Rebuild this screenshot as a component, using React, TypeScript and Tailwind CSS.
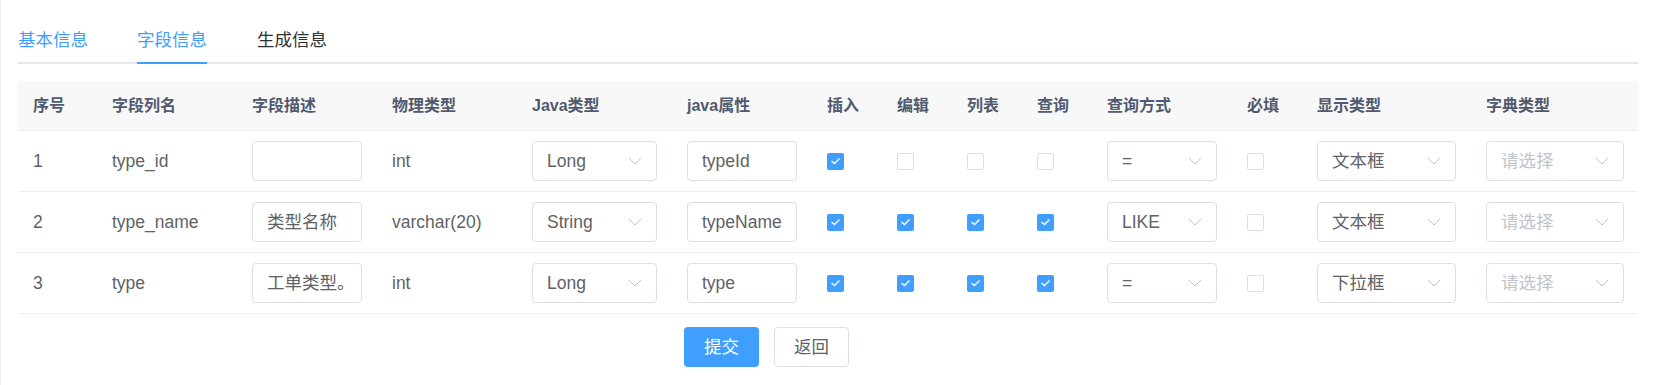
const FONT = "font-['Liberation_Sans','Noto_Sans_CJK_SC',sans-serif]";

const COLS = "grid grid-cols-[79px_140px_140px_140px_155px_140px_70px_70px_70px_70px_140px_70px_169px_167px]";

type Row = {
  no: string;
  name: string;
  desc: string;
  phys: string;
  javaType: string;
  javaField: string;
  insert: boolean;
  edit: boolean;
  list: boolean;
  query: boolean;
  queryType: string;
  required: boolean;
  htmlType: string;
};

const rows: Row[] = [
  { no: "1", name: "type_id", desc: "", phys: "int", javaType: "Long", javaField: "typeId", insert: true, edit: false, list: false, query: false, queryType: "=", required: false, htmlType: "文本框" },
  { no: "2", name: "type_name", desc: "类型名称", phys: "varchar(20)", javaType: "String", javaField: "typeName", insert: true, edit: true, list: true, query: true, queryType: "LIKE", required: false, htmlType: "文本框" },
  { no: "3", name: "type", desc: "工单类型。", phys: "int", javaType: "Long", javaField: "type", insert: true, edit: true, list: true, query: true, queryType: "=", required: false, htmlType: "下拉框" },
];

const headers = ["序号", "字段列名", "字段描述", "物理类型", "Java类型", "java属性", "插入", "编辑", "列表", "查询", "查询方式", "必填", "显示类型", "字典类型"];

function Chevron() {
  return (
    <svg width="14" height="8" viewBox="0 0 14 8" fill="none" className="shrink-0">
      <polyline points="1,1 7,7 13,1" stroke="#c0c4cc" strokeWidth="1" />
    </svg>
  );
}

function Input({ value, width }: { value: string; width: string }) {
  return (
    <div className={`${width} h-[40px] border border-[#dcdfe6] rounded-[4px] bg-white pl-[14px] pr-[4px] flex items-center overflow-hidden whitespace-nowrap text-[#606266]`}>
      {value}
    </div>
  );
}

function Select({ value, width, placeholder }: { value?: string; width: string; placeholder?: string }) {
  return (
    <div className={`${width} h-[40px] border border-[#dcdfe6] rounded-[4px] bg-white pl-[14px] pr-[14px] flex items-center justify-between whitespace-nowrap`}>
      <span className={value ? "text-[#606266]" : "text-[#c0c4cc]"}>{value ?? placeholder}</span>
      <Chevron />
    </div>
  );
}

function Check({ on }: { on: boolean }) {
  if (!on) {
    return <div className="w-[17px] h-[17px] rounded-[2px] border border-[#dcdfe6] bg-white" />;
  }
  return (
    <div className="w-[17px] h-[17px] rounded-[2px] bg-[#409eff] flex items-center justify-center">
      <svg width="11" height="8" viewBox="0 0 11 8" fill="none">
        <polyline points="1.5,4 4.5,6.5 9.5,1.5" stroke="#ffffff" strokeWidth="1.3" />
      </svg>
    </div>
  );
}

export default function App() {
  return (
    <div className={`${FONT} w-[1655px] h-[385px] bg-white border-l border-[#f0f0f0] pl-[17px] text-[17.5px] leading-[20px] text-[#606266]`}>
      {/* Tabs */}
      <div className="w-[1620px] pt-[18px] flex border-b-2 border-[#e4e7ed]">
        <div className="h-[46px] -mb-[2px] pr-[49px] flex items-center border-b-2 border-transparent text-[#409eff]">基本信息</div>
        <div className="h-[46px] -mb-[2px] mr-[50px] flex items-center border-b-2 border-[#409eff] text-[#409eff]">字段信息</div>
        <div className="h-[46px] -mb-[2px] flex items-center border-b-2 border-transparent text-[#303133]">生成信息</div>
      </div>

      {/* Table */}
      <div className="w-[1620px] mt-[17px]">
        <div className={`${COLS} h-[50px] bg-[#f8f8f9] border-b border-[#ebeef5] items-center text-[16px] font-bold text-[#515a6e]`}>
          {headers.map((h) => (
            <div key={h} className="pl-[15px] whitespace-nowrap">{h}</div>
          ))}
        </div>
        {rows.map((r) => (
          <div key={r.no} className={`${COLS} h-[61px] border-b border-[#ebeef5] items-center`}>
            <div className="pl-[15px]">{r.no}</div>
            <div className="pl-[15px]">{r.name}</div>
            <div className="pl-[15px]"><Input value={r.desc} width="w-[110px]" /></div>
            <div className="pl-[15px]">{r.phys}</div>
            <div className="pl-[15px]"><Select value={r.javaType} width="w-[125px]" /></div>
            <div className="pl-[15px]"><Input value={r.javaField} width="w-[110px]" /></div>
            <div className="pl-[15px]"><Check on={r.insert} /></div>
            <div className="pl-[15px]"><Check on={r.edit} /></div>
            <div className="pl-[15px]"><Check on={r.list} /></div>
            <div className="pl-[15px]"><Check on={r.query} /></div>
            <div className="pl-[15px]"><Select value={r.queryType} width="w-[110px]" /></div>
            <div className="pl-[15px]"><Check on={r.required} /></div>
            <div className="pl-[15px]"><Select value={r.htmlType} width="w-[139px]" /></div>
            <div className="pl-[15px]"><Select placeholder="请选择" width="w-[138px]" /></div>
          </div>
        ))}
      </div>

      {/* Buttons */}
      <div className="mt-[13px] pl-[666px] flex gap-[15px]">
        <button className="w-[75px] h-[40px] rounded-[4px] bg-[#409eff] text-white">提交</button>
        <button className="w-[75px] h-[40px] rounded-[4px] border border-[#dcdfe6] bg-white text-[#606266]">返回</button>
      </div>
    </div>
  );
}
